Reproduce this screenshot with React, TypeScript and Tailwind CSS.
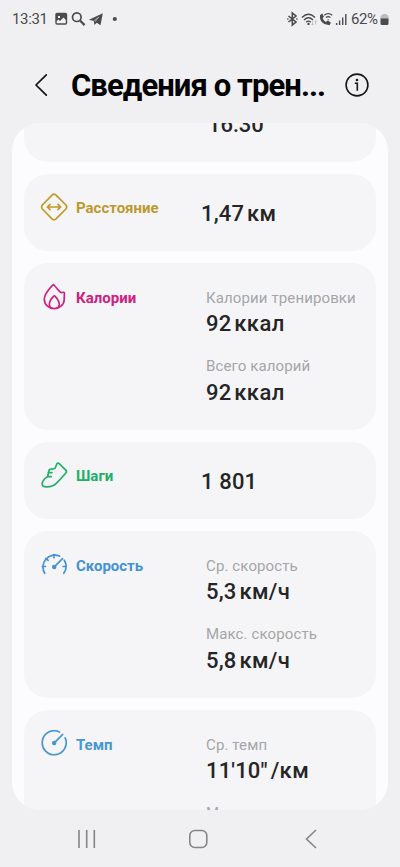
import React from 'react';

type Metric = { caption?: string; value: string; unit?: string };

function DistanceIcon() {
  return (
    <svg width="28" height="28" viewBox="0 0 28 28" fill="none" stroke="#bd9a2b" strokeWidth="1.7" strokeLinecap="round" strokeLinejoin="round">
      <path d="M12 2.1 Q14 .3 16 2.1 L25.900 12 Q27.500 14 25.900 16 L16 25.9 Q14 27.7 12 25.9 L2.400 16 Q.8 14 2.400 12Z" />
      <path d="M7.4 14H20.6M10 11.4 7.4 14l2.6 2.6M18 11.4l2.6 2.6-2.6 2.6" />
    </svg>
  );
}

function FlameIcon() {
  return (
    <svg width="28" height="28" viewBox="0 0 28 28" fill="none" stroke="#d0207f" strokeWidth="1.7" strokeLinecap="round" strokeLinejoin="round">
      <path d="M12.900 2C9.500 5.600 4.300 10.500 4.300 16.300c0 5.200 4.300 9.300 9.900 9.300s10-4 10-9.100c0-2.400.2-4.200.2-6.300q-.1-1.200-1.300-.9c-1 .5-2 .5-2.800-.2C18.300 7.400 16.300 4.300 14 2Q13.400 1.500 12.900 2Z" />
      <path d="M11.300 25.200c-1.500-1-2-2.300-2-3.800 0-3.200 2.100-5.900 4.400-8.300q.6-.6 1.200 0c2.300 2.400 4.400 5.100 4.400 8.300 0 1.500-.5 2.800-2 3.800" />
    </svg>
  );
}

function ShoeIcon() {
  return (
    <svg width="28" height="28" viewBox="0 0 28 28" fill="none" stroke="#20b067" strokeWidth="1.7" strokeLinecap="round" strokeLinejoin="round">
      <path d="M16.900 2.800Q18 1.500 19.200 2.600L26 9.300Q27 10.400 26 11.700C23 15.300 19.300 19.500 16 22.700 13.500 25.100 11 25.800 7 25.800 3.500 25.800 2.100 25.200 2.200 22.900 2.300 19.500 4.900 17.300 7.600 15.600L8.900 9.700Q9.300 8.100 11 8.100L13.600 8Q15.300 7.800 15.500 6.200Z" />
      <path d="M8.600 11.600h3.400M7.800 15.600h3.400" />
    </svg>
  );
}

function SpeedIcon() {
  return (
    <svg width="28" height="28" viewBox="0 0 28 28" fill="none" stroke="#4491d5" strokeWidth="1.7" strokeLinecap="round">
      <path d="M4.700 22.300A12 12 0 0 1 19.600 5M24.300 9.300A12 12 0 0 1 23.800 22.300M14 3.700v3M5.900 7.400l2.200 2M2.400 15.500h3M26.200 15.500h-3.100M14.800 15.400 22.500 7.600" />
      <circle cx="14.200" cy="16" r="1.400" fill="#4491d5" />
    </svg>
  );
}

function PaceIcon() {
  return (
    <svg width="28" height="28" viewBox="0 0 28 28" fill="none" stroke="#4797d2" strokeWidth="1.700" strokeLinecap="round">
      <path d="M19.400 1.900A12 12 0 1 0 25.200 7.900M14.800 12.300 22.700 4.300" />
      <circle cx="14.200" cy="12.900" r="1.400" fill="#4797d2" />
    </svg>
  );
}

function Value({ value, unit }: Metric) {
  return (
    <div className="flex h-7 items-baseline text-[22px] font-medium leading-7 whitespace-pre text-[#252527]">
      <span className="tracking-[0.15px]">{value}</span>
      {unit && <span className="ml-[3px] tracking-[0.4px]">{unit}</span>}
    </div>
  );
}

function Card({ icon, label, color, metrics }: { icon: React.ReactNode; label: string; color: string; metrics: Metric[] }) {
  const single = !metrics[0].caption;
  return (
    <section className={`flex shrink-0 rounded-[24px] bg-[#f5f5f7] pl-4 ${single ? 'h-[77px]' : 'h-[167px]'}`}>
      <div className={`flex h-7 items-center ${single ? 'mt-[19px] w-[161px]' : 'mt-[20px] w-[166px]'}`}>
        {icon}
        <span className={`mt-[2px] ml-2 text-[15px] font-bold leading-5 ${color}`}>{label}</span>
      </div>
      <div className={`flex flex-col ${single ? 'pt-[26px]' : 'gap-[18px] pt-[25px]'}`}>
        {metrics.map((m, i) => (
          <div key={i} className="flex flex-col gap-[2.4px]">
            {m.caption && <div className="h-5 text-[15px] leading-5 tracking-[0.12px] whitespace-nowrap text-[#a5a5a7]">{m.caption}</div>}
            <Value {...m} />
          </div>
        ))}
      </div>
    </section>
  );
}

function StatusBar() {
  return (
    <div className="flex h-[38px] items-center justify-between pr-[11px] pl-3 text-[#4b4b4d]">
      <div className="flex items-center">
        <span className="w-[43px] text-[15px] leading-5 tracking-[-0.35px]">13:31</span>
        <svg width="65" height="16" viewBox="0 0 65 16" fill="none" stroke="currentColor">
          <rect x="1" y="2.500" width="10.500" height="10.500" rx="1" strokeWidth="1.400" />
          <path d="M1 3h10v6L8.500 6.500 5 10 3.500 8.500 1 10.500Z" fill="currentColor" stroke="none" />
          <path d="M3 5h2v2H3Z" fill="#f0f0f2" stroke="none" />
          <circle cx="21.800" cy="6.200" r="4.300" strokeWidth="1.700" />
          <path d="m25 9.500 4.600 4.600" strokeWidth="2.200" />
          <path d="M34 8.700 47.800 2.300 45.500 14.300 41.800 11.700 39.500 14 38.700 9.900Z" fill="currentColor" stroke="none" />
          <path d="m38.700 9.900 5-3.700-3.700 4.500" stroke="#f0f0f2" strokeWidth=".5" />
          <circle cx="59.800" cy="8" r="2.100" fill="currentColor" stroke="none" />
        </svg>
      </div>
      <div className="flex items-center">
        <svg width="64" height="16" viewBox="0 0 64 16" fill="none" stroke="currentColor" strokeWidth="1.300">
          <path d="m2.500 5 7.500 6-3.700 3V2l3.700 3-7.500 6" strokeWidth="1.600" />
          <path d="M1.200 8h1.300M10.200 8h1.300" strokeWidth="1.600" />
          <path d="M16 6.500Q22.500 .200 29 6.500M18 9Q22.500 4.600 27 9M20.200 11.300Q22.500 9 24.800 11.300" strokeWidth="1.400" />
          <circle cx="22.500" cy="12.900" r="1.200" fill="currentColor" stroke="none" />
          <path d="M26.500 10.500v3.500m-1-1 1 1 1-1M29.700 13.500V9.500m-1 1 1-1 1 1" stroke="#b5b5b7" strokeWidth=".9" />
          <path d="M35.500 4C34.200 8.700 38 13.300 43.500 12.800" strokeWidth="2.500" />
          <path d="m34 5 2-2.700 2 3.500-1.700 1.200M40 10.700l2-1.200 3 2.200-1.800 2.500" fill="currentColor" stroke="none" />
          <path d="M38.200 4.200q4-3.200 8 0M40 6.600q2.200-2 4.400 0M41.700 8.600h.9" strokeWidth="1.300" />
          <path d="M50.600 14v-2M53.600 14V9.500M56.700 14V6.500M59.800 14V3" strokeWidth="1.400" />
        </svg>
        <span className="ml-[1px] w-[29px] text-[15px] leading-5 tracking-[-0.4px]">62%</span>
        <svg width="9" height="13" viewBox="0 0 9 13">
          <path d="M2.500 2V1h4v1H7q1.500 0 1.500 1.500V6H.5V3.500Q.5 2 2 2Z" fill="#bcbcbe" />
          <path d="M.5 5.500h8v5Q8.500 12 7 12H2Q.5 12 .5 10.500Z" fill="#4b4b4d" />
        </svg>
      </div>
    </div>
  );
}

export default function App() {
  return (
    <main className="flex h-[867px] w-[400px] flex-col overflow-hidden bg-[#f0f0f2] font-['Roboto',sans-serif]">
      <StatusBar />
      <header className="flex h-[85px] shrink-0 items-center pl-[34px]">
        <svg className="mt-[9px]" width="14" height="24" viewBox="0 0 14 24" fill="none" stroke="#111" strokeWidth="1.700" strokeLinecap="round" strokeLinejoin="round">
          <path d="M12.300 1.800 2 12l10.300 10.200" />
        </svg>
        <h1 className="mt-[11px] ml-[23px] w-[260px] text-[31px] font-bold leading-9 tracking-[-0.92px] whitespace-nowrap text-black">Сведения о трен...</h1>
        <svg className="mt-[9px] ml-[14px]" width="24" height="24" viewBox="0 0 24 24" fill="none" stroke="#161616" strokeWidth="1.600">
          <circle cx="12" cy="12" r="10.900" />
          <path d="M9.800 10.200h2.500v7.500" />
          <circle cx="12" cy="7" r="1.300" fill="#161616" stroke="none" />
        </svg>
      </header>

      <div className="mx-3 flex h-[687px] shrink-0 flex-col gap-3 overflow-hidden rounded-[28px] bg-[#fcfcfe] px-3">
        <section className="flex h-[39px] shrink-0 rounded-b-[24px] bg-[#f5f5f7] pl-[184px]">
          <div className="-mt-[12px] h-7 text-[22px] font-medium leading-7 text-[#252527]">16:30</div>
        </section>
        <Card icon={<DistanceIcon />} label="Расстояние" color="text-[#bd9a2b]" metrics={[{ value: '1,47', unit: 'км' }]} />
        <Card
          icon={<FlameIcon />}
          label="Калории"
          color="text-[#d0207f]"
          metrics={[
            { caption: 'Калории тренировки', value: '92', unit: 'ккал' },
            { caption: 'Всего калорий', value: '92', unit: 'ккал' },
          ]}
        />
        <Card icon={<ShoeIcon />} label="Шаги" color="text-[#20b067]" metrics={[{ value: '1 801' }]} />
        <Card
          icon={<SpeedIcon />}
          label="Скорость"
          color="text-[#4491d5]"
          metrics={[
            { caption: 'Ср. скорость', value: '5,3', unit: 'км/ч' },
            { caption: 'Макс. скорость', value: '5,8', unit: 'км/ч' },
          ]}
        />
        <Card
          icon={<PaceIcon />}
          label="Темп"
          color="text-[#4797d2]"
          metrics={[
            { caption: 'Ср. темп', value: '11\'10"', unit: '/км' },
            { caption: 'Макс. темп', value: '10\'20"', unit: '/км' },
          ]}
        />
      </div>

      <nav className="flex h-[57px] shrink-0 items-center pl-[77px]">
        <svg width="20" height="20" viewBox="0 0 20 20" stroke="#858587" strokeWidth="1.600">
          <path d="M2 1v18M9.700 1v18M17.300 1v18" />
        </svg>
        <svg className="ml-[91px]" width="20" height="20" viewBox="0 0 20 20" fill="none" stroke="#858587" strokeWidth="1.600">
          <rect x="1.800" y="1.500" width="17" height="17" rx="5" />
        </svg>
        <svg className="ml-[97px]" width="12" height="20" viewBox="0 0 12 20" fill="none" stroke="#858587" strokeWidth="1.600">
          <path d="m11 1-9.500 9L11 19" />
        </svg>
      </nav>
    </main>
  );
}
